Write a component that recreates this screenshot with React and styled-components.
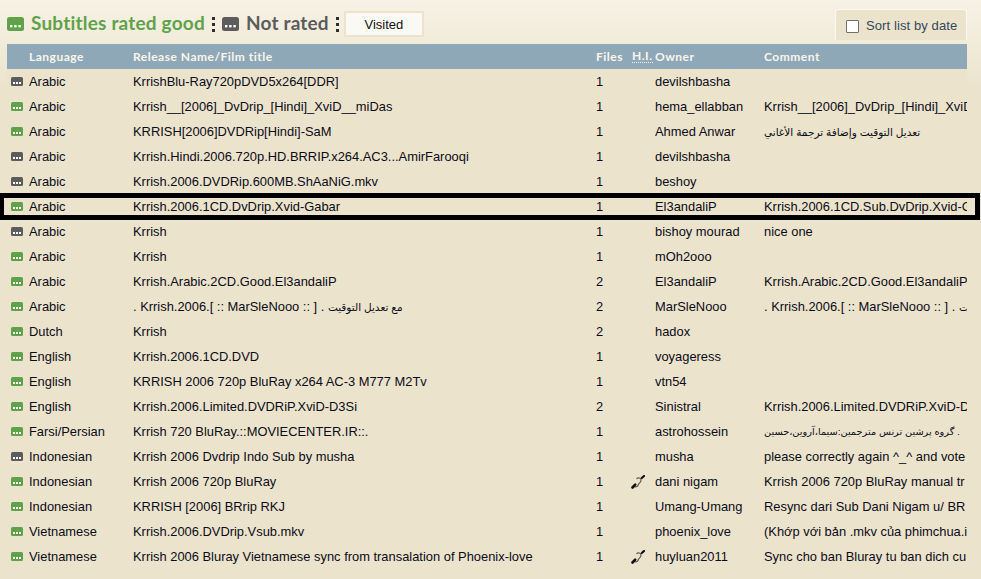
import React from "react";
import styled, { createGlobalStyle } from "styled-components";

const Global = createGlobalStyle`
  html, body { margin: 0; padding: 0; }
  body {
    width: 981px;
    height: 579px;
    overflow: hidden;
    background: linear-gradient(#f7f2e6 0, #ebe3cc 90px, #ebe3cc 100%);
    font-family: "Liberation Sans", Arial, "DejaVu Sans", sans-serif;
    font-size: 12.9px;
    color: #0c0c18;
  }
`;

const Page = styled.div`
  position: relative;
  width: 981px;
  height: 579px;
  padding: 0 14px 0 7px;
  box-sizing: border-box;
`;

const Toolbar = styled.div`
  display: flex;
  align-items: flex-end;
  justify-content: space-between;
  height: 44px;
`;

const Legend = styled.div`
  display: flex;
  align-items: center;
  height: 26px;
  margin-bottom: 7px;
`;

const RatingTitle = styled.span`
  margin-left: 7px;
  font-family: Lato, sans-serif;
  font-weight: 700;
  font-size: 19px;
  line-height: 24px;
  letter-spacing: 0.2px;
  padding-bottom: 2px;
  color: ${(p) => (p.$good ? "#5fa24a" : "#5c5c5c")};
`;

const Separator = styled.span`
  width: 0;
  height: 15px;
  margin: 0 7px;
  border-left: 3px dotted #2e2e2e;
`;

const VisitedTab = styled.div`
  box-sizing: border-box;
  width: 80px;
  height: 26px;
  margin-left: -2px;
  display: flex;
  align-items: center;
  justify-content: center;
  background: #fbf9f3;
  border: 2px solid #ebe3cc;
  font-size: 13px;
  color: #111;
`;

const SortBox = styled.label`
  box-sizing: border-box;
  width: 132px;
  height: 31px;
  margin-bottom: 4px;
  display: flex;
  align-items: center;
  gap: 7px;
  padding: 2px 0 0 10px;
  background: #ebe3cc;
  border: 1px solid #fbf9f3;
  border-bottom: none;
  border-radius: 4px 4px 0 0;
  font-size: 13px;
  letter-spacing: 0.1px;
  color: #33495c;
`;

const SortLabel = styled.span`
  margin-bottom: 2px;
`;

const CheckBox = styled.span`
  box-sizing: border-box;
  width: 13px;
  height: 13px;
  background: #fff;
  border: 1px solid #6f6f6f;
  border-radius: 1px;
`;

const Table = styled.div`
  width: 960px;
`;

const columns = "22px 104px 463px 36px 23px 109px 203px";

const HeaderRow = styled.div`
  display: grid;
  grid-template-columns: ${columns};
  height: 25px;
  align-items: center;
  background: #8fa8b7;
  font-family: Lato, sans-serif;
  font-weight: 700;
  font-size: 12px;
  letter-spacing: 0.5px;
  color: #f8f6ee;
`;

const HiHeader = styled.span`
  justify-self: start;
  border-bottom: 1px dotted #f8f6ee;
  line-height: 12px;
`;

const Row = styled.div`
  display: grid;
  grid-template-columns: ${columns};
  height: 25px;
  align-items: center;
  background: #ebe3cc;
  white-space: nowrap;
`;

const IconCell = styled.span`
  display: flex;
  align-items: center;
  padding-left: 4px;
`;

const Cell = styled.span`
  display: block;
  overflow: hidden;
  min-width: 0;
  line-height: 16px;
`;

const Arabic = styled.span`
  font-size: ${(p) => (p.$tight ? "9.8px" : "10.5px")};
`;

const HiCell = styled.span`
  display: flex;
  align-items: center;
  margin-left: -1px;
`;

const Highlight = styled.div`
  position: absolute;
  left: 0;
  top: 193px;
  width: 980px;
  height: 27px;
  box-sizing: border-box;
  border: 5px solid #000;
  border-left-width: 4px;
  pointer-events: none;
`;

const RatingIcon = ({ good, large }) => {
  const fill = good ? "#5fa24a" : "#5c5c5c";
  return large ? (
    <svg width="17" height="14" viewBox="0 0 17 14" style={{ display: "block" }}>
      <rect width="17" height="14" rx="2.5" fill={fill} />
      <rect x="3" y="8" width="2.4" height="2.4" fill="#fff" />
      <rect x="7.2" y="8" width="2.4" height="2.4" fill="#fff" />
      <rect x="11.4" y="8" width="2.4" height="2.4" fill="#fff" />
    </svg>
  ) : (
    <svg width="12" height="9" viewBox="0 0 12 9" style={{ display: "block" }}>
      <rect width="12" height="9" rx="1.5" fill={fill} />
      <rect x="2" y="5" width="2" height="2" fill="#fff" />
      <rect x="5" y="5" width="2" height="2" fill="#fff" />
      <rect x="8" y="5" width="2" height="2" fill="#fff" />
    </svg>
  );
};

const EarIcon = () => (
  <svg width="14" height="14" viewBox="0 0 14 14" style={{ display: "block" }}>
    <path d="M5.5 3.8 C7 2.2 10 2.8 10 5.2 C10 7.6 7.8 7.8 7.2 10 C6.8 11.4 5.2 12.2 3.8 11.6" stroke="#5f5a4c" strokeWidth="1.2" fill="none" />
    <path d="M1.5 12.5 L4.2 9.6" stroke="#111" strokeWidth="2.6" strokeLinecap="round" fill="none" />
    <path d="M10.8 3 L13 1" stroke="#111" strokeWidth="2.2" strokeLinecap="round" fill="none" />
  </svg>
);

const rows = [
  [0, "Arabic", "KrrishBlu-Ray720pDVD5x264[DDR]", 1, 0, "devilshbasha", ""],
  [1, "Arabic", "Krrish__[2006]_DvDrip_[Hindi]_XviD__miDas", 1, 0, "hema_ellabban", "Krrish__[2006]_DvDrip_[Hindi]_XviD"],
  [1, "Arabic", "KRRISH[2006]DVDRip[Hindi]-SaM", 1, 0, "Ahmed Anwar", <Arabic>تعديل التوقيت وإضافة ترجمة الأغاني</Arabic>],
  [0, "Arabic", "Krrish.Hindi.2006.720p.HD.BRRIP.x264.AC3...AmirFarooqi", 1, 0, "devilshbasha", ""],
  [0, "Arabic", "Krrish.2006.DVDRip.600MB.ShAaNiG.mkv", 1, 0, "beshoy", ""],
  [1, "Arabic", "Krrish.2006.1CD.DvDrip.Xvid-Gabar", 1, 0, "El3andaliP", "Krrish.2006.1CD.Sub.DvDrip.Xvid-G"],
  [0, "Arabic", "Krrish", 1, 0, "bishoy mourad", "nice one"],
  [1, "Arabic", "Krrish", 1, 0, "mOh2ooo", ""],
  [1, "Arabic", "Krrish.Arabic.2CD.Good.El3andaliP", 2, 0, "El3andaliP", "Krrish.Arabic.2CD.Good.El3andaliP"],
  [1, "Arabic", <>. Krrish.2006.[ :: MarSleNooo :: ] . <Arabic>مع تعديل التوقيت</Arabic></>, 2, 0, "MarSleNooo", <>. Krrish.2006.[ :: MarSleNooo :: ] . <Arabic>ت</Arabic></>],
  [1, "Dutch", "Krrish", 2, 0, "hadox", ""],
  [1, "English", "Krrish.2006.1CD.DVD", 1, 0, "voyageress", ""],
  [1, "English", "KRRISH 2006 720p BluRay x264 AC-3 M777 M2Tv", 1, 0, "vtn54", ""],
  [1, "English", "Krrish.2006.Limited.DVDRiP.XviD-D3Si", 2, 0, "Sinistral", "Krrish.2006.Limited.DVDRiP.XviD-D"],
  [1, "Farsi/Persian", "Krrish 720 BluRay.::MOVIECENTER.IR::.", 1, 0, "astrohossein", <Arabic $tight>گروه پرشین ترنس مترجمین:سیما،آروین،حسین .</Arabic>],
  [0, "Indonesian", "Krrish 2006 Dvdrip Indo Sub by musha", 1, 0, "musha", "please correctly again ^_^ and vote"],
  [1, "Indonesian", "Krrish 2006 720p BluRay", 1, 1, "dani nigam", "Krrish 2006 720p BluRay manual tr"],
  [1, "Indonesian", "KRRISH [2006] BRrip RKJ", 1, 0, "Umang-Umang", "Resync dari Sub Dani Nigam u/ BR"],
  [1, "Vietnamese", "Krrish.2006.DVDrip.Vsub.mkv", 1, 0, "phoenix_love", "(Khớp với bản .mkv của phimchua.i"],
  [1, "Vietnamese", "Krrish 2006 Bluray Vietnamese sync from transalation of Phoenix-love", 1, 1, "huyluan2011", "Sync cho ban Bluray tu ban dich cu"],
];

export default function App() {
  return (
    <>
      <Global />
      <Page>
        <Toolbar>
          <Legend>
            <RatingIcon good large />
            <RatingTitle $good>Subtitles rated good</RatingTitle>
            <Separator />
            <RatingIcon large />
            <RatingTitle>Not rated</RatingTitle>
            <Separator />
            <VisitedTab>Visited</VisitedTab>
          </Legend>
          <SortBox>
            <CheckBox />
            <SortLabel>Sort list by date</SortLabel>
          </SortBox>
        </Toolbar>
        <Table>
          <HeaderRow>
            <span />
            <span>Language</span>
            <span>Release Name/Film title</span>
            <span>Files</span>
            <HiHeader>H.I.</HiHeader>
            <span>Owner</span>
            <span>Comment</span>
          </HeaderRow>
          {rows.map(([good, lang, name, files, hi, owner, comment], i) => (
            <Row key={i}>
              <IconCell>
                <RatingIcon good={!!good} />
              </IconCell>
              <Cell>{lang}</Cell>
              <Cell>{name}</Cell>
              <Cell>{files}</Cell>
              <HiCell>{hi ? <EarIcon /> : null}</HiCell>
              <Cell>{owner}</Cell>
              <Cell>{comment}</Cell>
            </Row>
          ))}
        </Table>
        <Highlight />
      </Page>
    </>
  );
}
